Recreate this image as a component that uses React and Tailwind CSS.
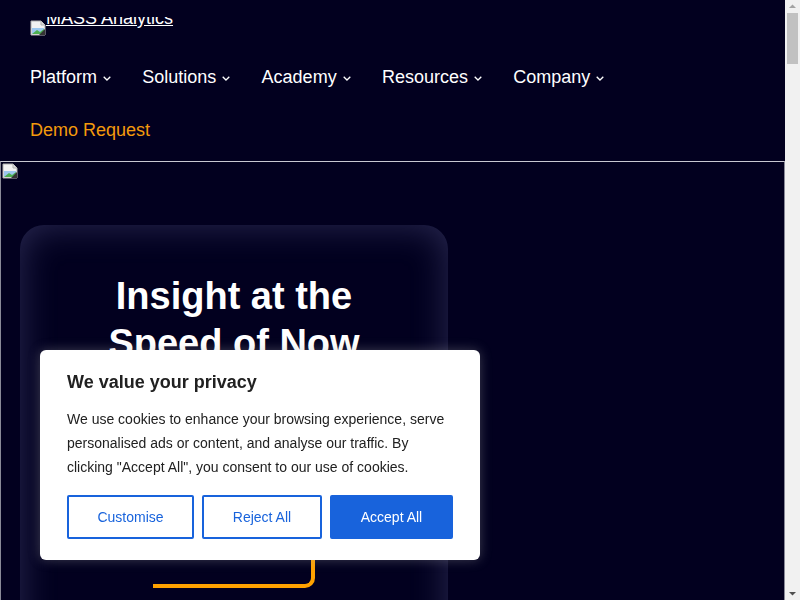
import React from "react";

const BrokenImg = () => (
  <svg width="16" height="16" viewBox="0 0 16 16">
    <path d="M1 1h10l4 4v10H1z" fill="#f2f2f2" stroke="#b0b0b0" strokeWidth="1" />
    <path d="M11 1v4h4" fill="#dcdcdc" stroke="#b0b0b0" strokeWidth="1" />
    <path d="M2 8h12v6H2z" fill="#9cc7ee" />
    <path d="M2 14l5-4 3 2 4-3v5z" fill="#4caf50" />
    <path d="M9 15l6-6v6z" fill="#333" />
  </svg>
);

const Chevron = () => (
  <svg width="8" height="5" viewBox="0 0 8 5" className="ml-[6px] mt-[3px]">
    <path d="M0.7 0.7l3.3 3.3 3.3-3.3" fill="none" stroke="#ffffff" strokeWidth="1.3" />
  </svg>
);

const navItems = ["Platform", "Solutions", "Academy", "Resources", "Company"];

export default function App() {
  return (
    <div className="flex h-[600px] overflow-hidden bg-[#02001f] font-['Liberation_Sans',Arial,sans-serif]">
      <div className="w-[785px] shrink-0">
        {/* header */}
        <header className="h-[161px] pl-[30px] pt-[17px]">
          <a href="#" className="relative block h-[19px] w-[145px] overflow-hidden">
            <span className="absolute left-0 bottom-0">
              <BrokenImg />
            </span>
            <span className="absolute left-[16px] top-[-9px] text-[18px] leading-[21px] text-white underline whitespace-nowrap">
              MASS Analytics
            </span>
          </a>
          <nav className="mt-[29px] flex h-[24px] items-center gap-[31.25px]">
            {navItems.map((item) => (
              <div key={item} className="flex items-center text-[18px] text-white">
                {item}
                <Chevron />
              </div>
            ))}
          </nav>
          <div className="mt-[29px] text-[18px] leading-[24px] text-[#f39a0c]">Demo Request</div>
        </header>

        {/* hero */}
        <section className="h-[439px] border-l border-r border-t border-l-[#8a8a98] border-r-[#8a8a98] border-t-[#c8c8d2] pl-[19px]">
          <div className="-ml-[18px] mt-[1px] h-[16px]">
            <BrokenImg />
          </div>
          <div className="mt-[46px] flex h-[500px] w-[428px] flex-col items-center rounded-[24px] pt-[48px] shadow-[inset_0_0_36px_rgba(150,150,220,0.28)]">
            <h1 className="text-center text-[38px] font-bold leading-[47px] text-white">
              Insight at the
              <br />
              Speed of Now
            </h1>
            <div className="mt-[171px] h-[50px] w-[162px] rounded-br-[10px] border-b-4 border-r-4 border-[#ffa200]" />
          </div>
        </section>
      </div>

      {/* scrollbar */}
      <div className="flex h-[600px] w-[15px] flex-col items-center bg-[#f1f1f1]">
        <svg width="15" height="13" viewBox="0 0 15 13">
          <path d="M4 8h7L7.5 4.5z" fill="#a3a3a3" />
        </svg>
        <div className="h-[51px] w-[11px] bg-[#c1c1c1]" />
        <div className="flex-1" />
        <svg width="15" height="13" viewBox="0 0 15 13">
          <path d="M4 5h7L7.5 8.5z" fill="#505050" />
        </svg>
      </div>

      {/* cookie banner */}
      <div className="fixed bottom-[40px] left-[40px] w-[440px] rounded-[6px] bg-white px-[27px] pb-[21px] pt-[20px] shadow-[0_0_12px_rgba(172,171,171,0.35)]">
        <div className="text-[18px] font-bold leading-[24px] text-[#212121]">We value your privacy</div>
        <p className="mt-[13px] text-[14px] leading-[24px] text-[#212121]">
          We use cookies to enhance your browsing experience, serve personalised ads or content, and analyse our traffic. By clicking "Accept All", you consent to our use of cookies.
        </p>
        <div className="mt-[16px] flex gap-[8px]">
          <button className="h-[44px] w-[127px] rounded-[2px] border-2 border-[#1863dc] text-[14px] text-[#1863dc]">
            Customise
          </button>
          <button className="h-[44px] w-[120px] rounded-[2px] border-2 border-[#1863dc] text-[14px] text-[#1863dc]">
            Reject All
          </button>
          <button className="h-[44px] w-[123px] rounded-[2px] border-2 border-[#1863dc] bg-[#1863dc] text-[14px] text-white">
            Accept All
          </button>
        </div>
      </div>
    </div>
  );
}
